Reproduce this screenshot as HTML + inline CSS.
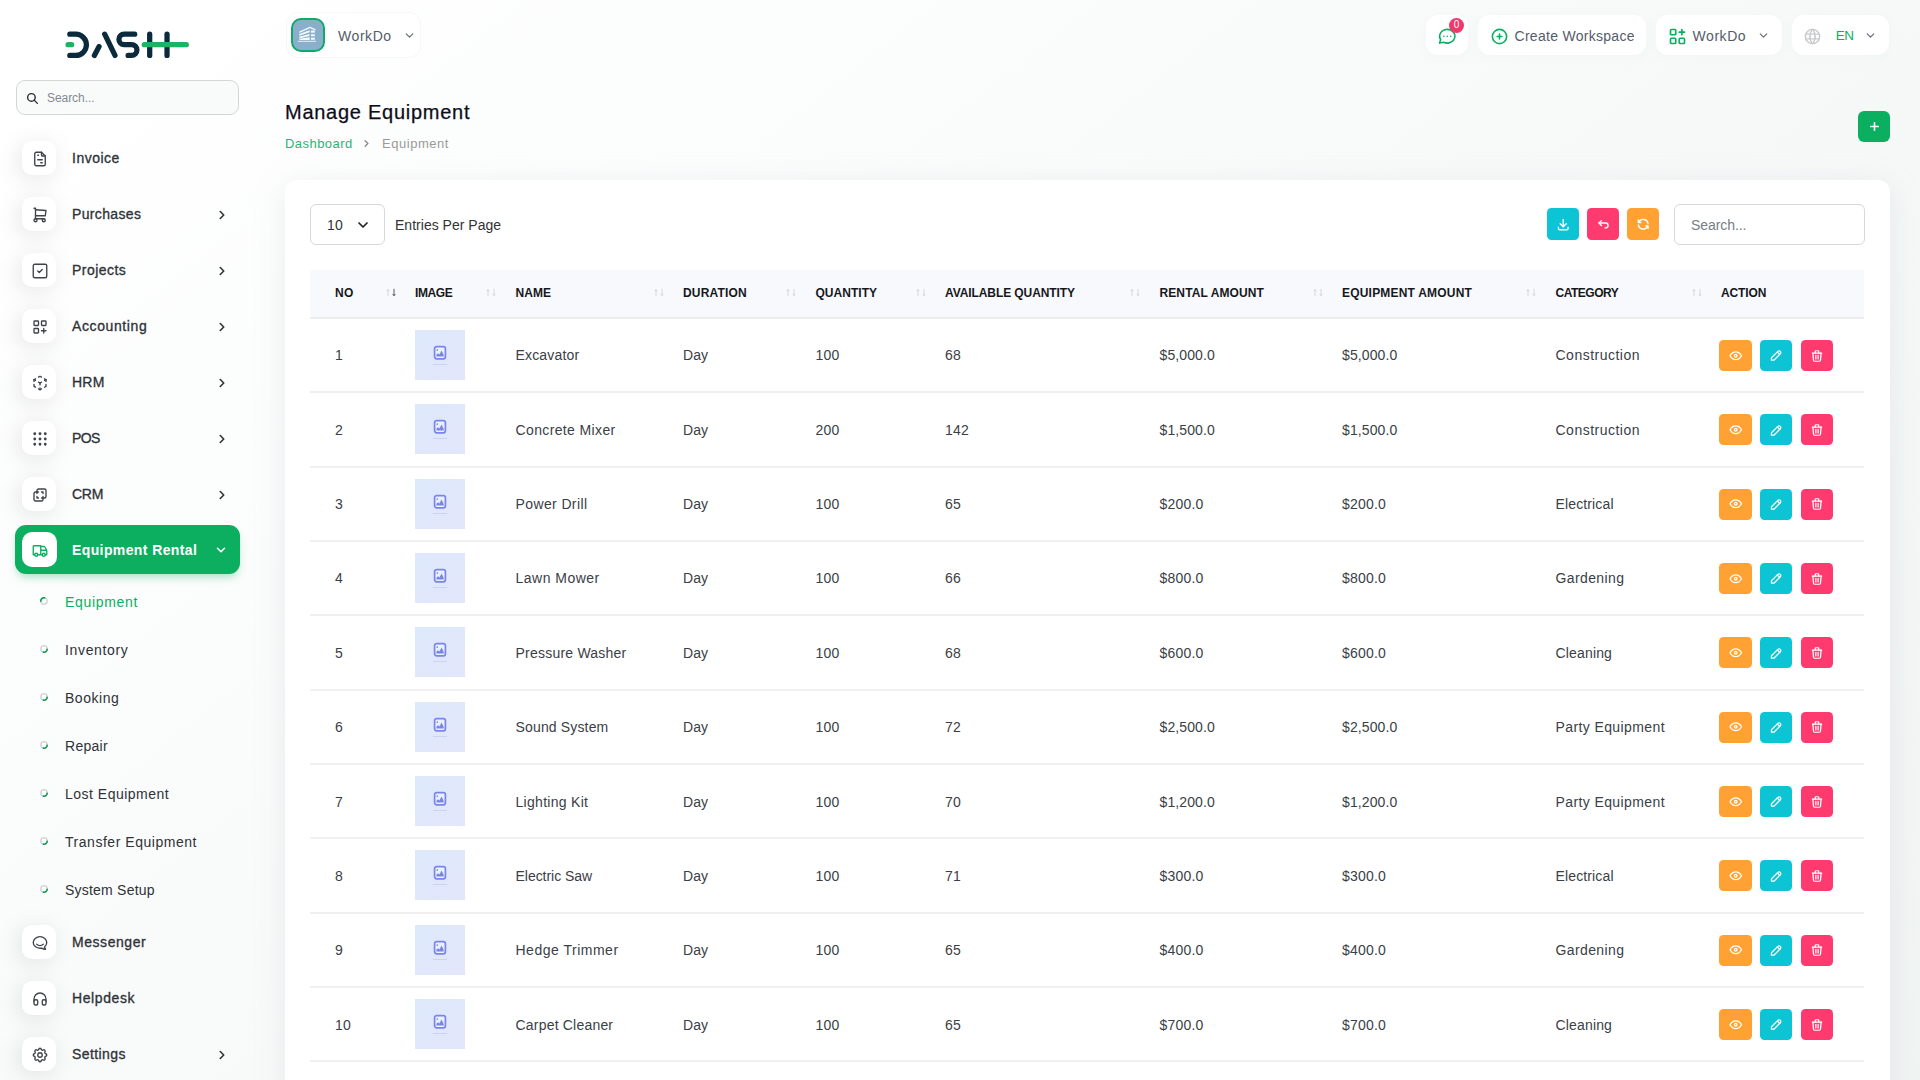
<!DOCTYPE html>
<html><head><meta charset="utf-8"><title>Manage Equipment</title>
<style>
*{box-sizing:border-box;margin:0;padding:0}
html,body{width:1920px;height:1080px;overflow:hidden}
body{font-family:"Liberation Sans",sans-serif;background:linear-gradient(141.55deg,#ffffff 3.46%,#f0f4f3 99.86%);position:relative;color:#333}
.t{position:absolute;white-space:nowrap}
.i{position:absolute;display:block}
.b{position:absolute}
.nb{position:absolute;left:22px;width:34px;height:34px;border-radius:10px;background:#fff;box-shadow:-3px 4px 23px rgba(0,0,0,.10)}
.hb{position:absolute;top:15px;height:40px;border-radius:12px;background:#fff;box-shadow:0 2px 10px rgba(180,190,200,.08)}
.ab{position:absolute;width:32.300px;height:31px;border-radius:4.500px}
.ln{position:absolute;left:310px;width:1554px;height:1.8px;background:#f0f0f1}
.im{position:absolute;left:415px;width:50px;height:50px;background:linear-gradient(135deg,#dde9fb,#e3e6fa)}
</style></head><body>
<svg class="i" style="left:40px;top:15px" width="180" height="60" viewBox="0 0 1920 640" fill="none" stroke-linecap="round" stroke-linejoin="round">
<g stroke="#0b2a3b" stroke-width="56">
<path d="M318 205H382A113 113 0 0 1 382 431H318"/>
<path d="M690 205L800 431"/><path d="M580 431L630 337"/>
<path d="M1010 205H897A55 55 0 0 0 897 315H976A58 58 0 0 1 976 431H940"/>
<path d="M1170 205V431"/><path d="M1355 205V431"/>
</g>
<g stroke="#1bb465" stroke-width="57"><path d="M300 316H337"/><path d="M1113 316H1560"/></g>
</svg>
<div class="b" style="left:16px;top:80px;width:223px;height:35px;border:1px solid #d3d6d9;border-radius:9px;background:#f9fafa"></div>
<svg class="i" style="left:26.3px;top:91.8px;" width="13" height="13" viewBox="0 0 24 24" fill="none" stroke="#2b2b2b" stroke-width="2.58" stroke-linecap="round" stroke-linejoin="round"><circle cx="10" cy="10" r="7"/><path d="M21 21l-6 -6"/></svg>
<div class="t" style="left:47.0px;top:87.5px;font-size:12px;font-weight:400;color:#858a90;line-height:20px;letter-spacing:-0.060px;">Search...</div>
<div class="nb" style="top:141px"></div>
<svg class="i" style="left:31px;top:149.8px;color:#3f444b;" width="18" height="18" viewBox="0 0 24 24" fill="none" stroke="#3f444b" stroke-width="1.80" stroke-linecap="round" stroke-linejoin="round"><path d="M14 3v4a1 1 0 0 0 1 1h4"/><path d="M17 21h-10a2 2 0 0 1 -2 -2v-14a2 2 0 0 1 2 -2h7l5 5v11a2 2 0 0 1 -2 2z"/><path d="M9 7h1"/><path d="M9 13h6"/><path d="M13 17h2"/></svg>
<div class="t" style="left:72.0px;top:148.0px;font-size:14px;font-weight:400;color:#2f3237;line-height:20px;letter-spacing:0.508px;-webkit-text-stroke:.32px #2f3237;">Invoice</div>
<div class="nb" style="top:197px"></div>
<svg class="i" style="left:31px;top:205.8px;color:#3f444b;" width="18" height="18" viewBox="0 0 24 24" fill="none" stroke="#3f444b" stroke-width="1.80" stroke-linecap="round" stroke-linejoin="round"><circle cx="6" cy="19" r="2"/><circle cx="17" cy="19" r="2"/><path d="M17 17h-11v-14h-2"/><path d="M6 5l14 1l-1 7h-13"/></svg>
<div class="t" style="left:72.0px;top:204.0px;font-size:14px;font-weight:400;color:#2f3237;line-height:20px;letter-spacing:0.356px;-webkit-text-stroke:.32px #2f3237;">Purchases</div>
<svg class="i" style="left:214.5px;top:208px;" width="14" height="14" viewBox="0 0 24 24" fill="none" stroke="#2f3237" stroke-width="2.74" stroke-linecap="round" stroke-linejoin="round"><path d="M9 6l6 6l-6 6"/></svg>
<div class="nb" style="top:253px"></div>
<svg class="i" style="left:31px;top:261.8px;color:#3f444b;" width="18" height="18" viewBox="0 0 24 24" fill="none" stroke="#3f444b" stroke-width="1.80" stroke-linecap="round" stroke-linejoin="round"><rect x="3" y="3" width="18" height="18" rx="2"/><path d="M9 12l2 2l4 -4"/></svg>
<div class="t" style="left:72.0px;top:260.0px;font-size:14px;font-weight:400;color:#2f3237;line-height:20px;letter-spacing:0.467px;-webkit-text-stroke:.32px #2f3237;">Projects</div>
<svg class="i" style="left:214.5px;top:264px;" width="14" height="14" viewBox="0 0 24 24" fill="none" stroke="#2f3237" stroke-width="2.74" stroke-linecap="round" stroke-linejoin="round"><path d="M9 6l6 6l-6 6"/></svg>
<div class="nb" style="top:309px"></div>
<svg class="i" style="left:31px;top:317.8px;color:#3f444b;" width="18" height="18" viewBox="0 0 24 24" fill="none" stroke="#3f444b" stroke-width="1.80" stroke-linecap="round" stroke-linejoin="round"><rect x="4" y="4" width="6" height="6" rx="1"/><rect x="14" y="4" width="6" height="6" rx="1"/><rect x="4" y="14" width="6" height="6" rx="1"/><path d="M14 17h6m-3 -3v6"/></svg>
<div class="t" style="left:72.0px;top:316.0px;font-size:14px;font-weight:400;color:#2f3237;line-height:20px;letter-spacing:0.608px;-webkit-text-stroke:.32px #2f3237;">Accounting</div>
<svg class="i" style="left:214.5px;top:320px;" width="14" height="14" viewBox="0 0 24 24" fill="none" stroke="#2f3237" stroke-width="2.74" stroke-linecap="round" stroke-linejoin="round"><path d="M9 6l6 6l-6 6"/></svg>
<div class="nb" style="top:365px"></div>
<svg class="i" style="left:31px;top:373.8px;color:#3f444b;" width="18" height="18" viewBox="0 0 24 24" fill="none" stroke="#3f444b" stroke-width="1.80" stroke-linecap="round" stroke-linejoin="round"><path d="M6 17.6l-2 -1.1v-2.5"/><path d="M4 10v-2.5l2 -1.1"/><path d="M10 4.1l2 -1.1l2 1.1"/><path d="M18 6.4l2 1.1v2.5"/><path d="M20 14v2.5l-2 1.12"/><path d="M14 19.9l-2 1.1l-2 -1.1"/><path d="M12 12l2 -1.1"/><path d="M18 8.6l2 -1.1"/><path d="M12 12v2.5"/><path d="M12 18.5v2.5"/><path d="M12 12l-2 -1.12"/><path d="M6 8.6l-2 -1.1"/></svg>
<div class="t" style="left:72.0px;top:372.0px;font-size:14px;font-weight:400;color:#2f3237;line-height:20px;letter-spacing:0.227px;-webkit-text-stroke:.32px #2f3237;">HRM</div>
<svg class="i" style="left:214.5px;top:376px;" width="14" height="14" viewBox="0 0 24 24" fill="none" stroke="#2f3237" stroke-width="2.74" stroke-linecap="round" stroke-linejoin="round"><path d="M9 6l6 6l-6 6"/></svg>
<div class="nb" style="top:421px"></div>
<svg class="i" style="left:31px;top:429.8px;color:#3f444b;" width="18" height="18" viewBox="0 0 24 24" fill="none" stroke="#3f444b" stroke-width="1.80" stroke-linecap="round" stroke-linejoin="round"><circle cx="5" cy="5" r="1" fill="currentColor"/><circle cx="12" cy="5" r="1" fill="currentColor"/><circle cx="19" cy="5" r="1" fill="currentColor"/><circle cx="5" cy="12" r="1" fill="currentColor"/><circle cx="12" cy="12" r="1" fill="currentColor"/><circle cx="19" cy="12" r="1" fill="currentColor"/><circle cx="5" cy="19" r="1" fill="currentColor"/><circle cx="12" cy="19" r="1" fill="currentColor"/><circle cx="19" cy="19" r="1" fill="currentColor"/></svg>
<div class="t" style="left:72.0px;top:428.0px;font-size:14px;font-weight:400;color:#2f3237;line-height:20px;letter-spacing:-0.584px;-webkit-text-stroke:.32px #2f3237;">POS</div>
<svg class="i" style="left:214.5px;top:432px;" width="14" height="14" viewBox="0 0 24 24" fill="none" stroke="#2f3237" stroke-width="2.74" stroke-linecap="round" stroke-linejoin="round"><path d="M9 6l6 6l-6 6"/></svg>
<div class="nb" style="top:477px"></div>
<svg class="i" style="left:31px;top:485.8px;color:#3f444b;" width="18" height="18" viewBox="0 0 24 24" fill="none" stroke="#3f444b" stroke-width="1.80" stroke-linecap="round" stroke-linejoin="round"><path d="M16 16v2a2 2 0 0 1 -2 2h-8a2 2 0 0 1 -2 -2v-8a2 2 0 0 1 2 -2h2v-2a2 2 0 0 1 2 -2h8a2 2 0 0 1 2 2v8a2 2 0 0 1 -2 2h-2"/><path d="M10 8h-2v2"/><path d="M8 14v2h2"/><path d="M14 8h2v2"/><path d="M16 14v2h-2"/></svg>
<div class="t" style="left:72.0px;top:484.0px;font-size:14px;font-weight:400;color:#2f3237;line-height:20px;letter-spacing:-0.287px;-webkit-text-stroke:.32px #2f3237;">CRM</div>
<svg class="i" style="left:214.5px;top:488px;" width="14" height="14" viewBox="0 0 24 24" fill="none" stroke="#2f3237" stroke-width="2.74" stroke-linecap="round" stroke-linejoin="round"><path d="M9 6l6 6l-6 6"/></svg>
<div class="b" style="left:15px;top:525px;width:225px;height:49px;border-radius:11px;background:#0CAF60;box-shadow:0 5px 8px -2px rgba(12,175,96,.35)"></div>
<div class="b" style="left:22px;top:532.2px;width:34.8px;height:34.8px;border-radius:10px;background:#fff"></div>
<svg class="i" style="left:31px;top:541.8px;" width="18" height="18" viewBox="0 0 24 24" fill="none" stroke="#0CAF60" stroke-width="1.80" stroke-linecap="round" stroke-linejoin="round"><circle cx="7" cy="17" r="2"/><circle cx="17" cy="17" r="2"/><path d="M5 17h-2v-11a1 1 0 0 1 1 -1h9v12m-4 0h6m4 0h2v-6h-8m0 -5h5l3 5"/></svg>
<div class="t" style="left:72.0px;top:540.0px;font-size:14px;font-weight:700;color:#fff;line-height:20px;letter-spacing:0.391px;">Equipment Rental</div>
<svg class="i" style="left:213.5px;top:542.5px;" width="14" height="14" viewBox="0 0 24 24" fill="none" stroke="#fff" stroke-width="2.74" stroke-linecap="round" stroke-linejoin="round"><path d="M6 9l6 6l6 -6"/></svg>
<svg class="i" style="left:38.9px;top:595.7px" width="10" height="10" viewBox="0 0 10 10" fill="none"><circle cx="5" cy="5" r="3.2" stroke="#d6d8d7" stroke-width="1.5"/><path d="M1.81 5.28A3.2 3.2 0 0 1 5.56 1.85" stroke="#0a9d57" stroke-width="1.6" stroke-linecap="round"/></svg>
<div class="t" style="left:65.0px;top:591.5px;font-size:14px;font-weight:400;color:#0CAF60;line-height:20px;letter-spacing:0.676px;">Equipment</div>
<svg class="i" style="left:38.9px;top:643.7px" width="10" height="10" viewBox="0 0 10 10" fill="none"><circle cx="5" cy="5" r="3.2" stroke="#d6d8d7" stroke-width="1.5"/><path d="M8.19 5.28A3.2 3.2 0 0 1 4.44 8.15" stroke="#0a9d57" stroke-width="1.6" stroke-linecap="round"/></svg>
<div class="t" style="left:65.0px;top:639.5px;font-size:14px;font-weight:400;color:#2f3237;line-height:20px;letter-spacing:0.658px;">Inventory</div>
<svg class="i" style="left:38.9px;top:691.7px" width="10" height="10" viewBox="0 0 10 10" fill="none"><circle cx="5" cy="5" r="3.2" stroke="#d6d8d7" stroke-width="1.5"/><path d="M8.19 5.28A3.2 3.2 0 0 1 4.44 8.15" stroke="#0a9d57" stroke-width="1.6" stroke-linecap="round"/></svg>
<div class="t" style="left:65.0px;top:687.5px;font-size:14px;font-weight:400;color:#2f3237;line-height:20px;letter-spacing:0.530px;">Booking</div>
<svg class="i" style="left:38.9px;top:739.7px" width="10" height="10" viewBox="0 0 10 10" fill="none"><circle cx="5" cy="5" r="3.2" stroke="#d6d8d7" stroke-width="1.5"/><path d="M8.19 5.28A3.2 3.2 0 0 1 4.44 8.15" stroke="#0a9d57" stroke-width="1.6" stroke-linecap="round"/></svg>
<div class="t" style="left:65.0px;top:735.5px;font-size:14px;font-weight:400;color:#2f3237;line-height:20px;letter-spacing:0.277px;">Repair</div>
<svg class="i" style="left:38.9px;top:787.7px" width="10" height="10" viewBox="0 0 10 10" fill="none"><circle cx="5" cy="5" r="3.2" stroke="#d6d8d7" stroke-width="1.5"/><path d="M8.19 5.28A3.2 3.2 0 0 1 4.44 8.15" stroke="#0a9d57" stroke-width="1.6" stroke-linecap="round"/></svg>
<div class="t" style="left:65.0px;top:783.5px;font-size:14px;font-weight:400;color:#2f3237;line-height:20px;letter-spacing:0.493px;">Lost Equipment</div>
<svg class="i" style="left:38.9px;top:835.7px" width="10" height="10" viewBox="0 0 10 10" fill="none"><circle cx="5" cy="5" r="3.2" stroke="#d6d8d7" stroke-width="1.5"/><path d="M8.19 5.28A3.2 3.2 0 0 1 4.44 8.15" stroke="#0a9d57" stroke-width="1.6" stroke-linecap="round"/></svg>
<div class="t" style="left:65.0px;top:831.5px;font-size:14px;font-weight:400;color:#2f3237;line-height:20px;letter-spacing:0.534px;">Transfer Equipment</div>
<svg class="i" style="left:38.9px;top:883.7px" width="10" height="10" viewBox="0 0 10 10" fill="none"><circle cx="5" cy="5" r="3.2" stroke="#d6d8d7" stroke-width="1.5"/><path d="M8.19 5.28A3.2 3.2 0 0 1 4.44 8.15" stroke="#0a9d57" stroke-width="1.6" stroke-linecap="round"/></svg>
<div class="t" style="left:65.0px;top:879.5px;font-size:14px;font-weight:400;color:#2f3237;line-height:20px;letter-spacing:0.220px;">System Setup</div>
<div class="nb" style="top:925px"></div>
<svg class="i" style="left:31px;top:933.8px;" width="18" height="18" viewBox="0 0 24 24" fill="none" stroke="#3f444b" stroke-width="1.80" stroke-linecap="round" stroke-linejoin="round"><path d="M17.802 17.292s.077 -.055 .2 -.149c1.843 -1.425 3 -3.49 3 -5.789c0 -4.286 -4.03 -7.764 -9 -7.764c-4.97 0 -9 3.478 -9 7.764c0 4.288 4.03 7.646 9 7.646c.424 0 1.12 -.028 2.088 -.084c1.262 .82 3.104 1.493 4.716 1.493c.499 0 .734 -.41 .414 -.828c-.486 -.596 -1.156 -1.551 -1.416 -2.29z"/><path d="M7.5 13.5c2.5 2.5 6.5 2.5 9 0"/></svg>
<div class="t" style="left:72.0px;top:932.0px;font-size:14px;font-weight:400;color:#2f3237;line-height:20px;letter-spacing:0.552px;-webkit-text-stroke:.32px #2f3237;">Messenger</div>
<div class="nb" style="top:981px"></div>
<svg class="i" style="left:31px;top:989.8px;" width="18" height="18" viewBox="0 0 24 24" fill="none" stroke="#3f444b" stroke-width="1.80" stroke-linecap="round" stroke-linejoin="round"><rect x="4" y="13" width="5" height="7" rx="2"/><rect x="15" y="13" width="5" height="7" rx="2"/><path d="M4 15v-3a8 8 0 0 1 16 0v3"/></svg>
<div class="t" style="left:72.0px;top:988.0px;font-size:14px;font-weight:400;color:#2f3237;line-height:20px;letter-spacing:0.602px;-webkit-text-stroke:.32px #2f3237;">Helpdesk</div>
<div class="nb" style="top:1037px"></div>
<svg class="i" style="left:31px;top:1045.8px;" width="18" height="18" viewBox="0 0 24 24" fill="none" stroke="#3f444b" stroke-width="1.80" stroke-linecap="round" stroke-linejoin="round"><path d="M10.325 4.317c.426 -1.756 2.924 -1.756 3.35 0a1.724 1.724 0 0 0 2.573 1.066c1.543 -.94 3.31 .826 2.37 2.37a1.724 1.724 0 0 0 1.065 2.572c1.756 .426 1.756 2.924 0 3.35a1.724 1.724 0 0 0 -1.066 2.573c.94 1.543 -.826 3.31 -2.37 2.37a1.724 1.724 0 0 0 -2.572 1.065c-.426 1.756 -2.924 1.756 -3.35 0a1.724 1.724 0 0 0 -2.573 -1.066c-1.543 .94 -3.31 -.826 -2.37 -2.37a1.724 1.724 0 0 0 -1.065 -2.572c-1.756 -.426 -1.756 -2.924 0 -3.35a1.724 1.724 0 0 0 1.066 -2.573c-.94 -1.543 .826 -3.31 2.37 -2.37c1 .608 2.296 .07 2.572 -1.065z"/><circle cx="12" cy="12" r="3"/></svg>
<div class="t" style="left:72.0px;top:1044.0px;font-size:14px;font-weight:400;color:#2f3237;line-height:20px;letter-spacing:0.410px;-webkit-text-stroke:.32px #2f3237;">Settings</div>
<svg class="i" style="left:214.5px;top:1048px;" width="14" height="14" viewBox="0 0 24 24" fill="none" stroke="#2f3237" stroke-width="2.74" stroke-linecap="round" stroke-linejoin="round"><path d="M9 6l6 6l-6 6"/></svg>
<div class="b" style="left:285.5px;top:12px;width:135.5px;height:45.5px;border-radius:12px;background:#fff;border:1px solid #f6f7f7"></div>
<div class="b" style="left:291.1px;top:17.900px;width:33.800px;height:33.800px;border-radius:10px;background:#8aafcb;border:2px solid #10a968"></div>
<svg class="i" style="left:288px;top:14px" width="40" height="42" viewBox="0 0 1029 1080" fill="#f4f9fd"><path d="M300 465L565 345L692 402" fill="none" stroke="#f4f9fd" stroke-width="32" stroke-linejoin="round" stroke-linecap="round"/><path d="M290 515L557 418V472L290 560z"/><path d="M290 585L552 512V568L290 630z"/><path d="M298 636L557 598V668H298z"/><rect x="590" y="425" width="100" height="55"/><rect x="590" y="520" width="100" height="52"/><rect x="590" y="608" width="100" height="55"/><rect x="250" y="690" width="470" height="22"/></svg>
<div class="t" style="left:338.0px;top:25.5px;font-size:14px;font-weight:400;color:#555c6b;line-height:20px;letter-spacing:0.566px;">WorkDo</div>
<svg class="i" style="left:402.5px;top:28.5px;" width="13" height="13" viewBox="0 0 24 24" fill="none" stroke="#666c78" stroke-width="2.22" stroke-linecap="round" stroke-linejoin="round"><path d="M6 9l6 6l6 -6"/></svg>
<div class="hb" style="left:1425.5px;width:42px"></div>
<svg class="i" style="left:1437px;top:26px;" width="20.5" height="20.5" viewBox="0 0 24 24" fill="none" stroke="#0CAF60" stroke-width="1.87" stroke-linecap="round" stroke-linejoin="round"><path d="M3 20l1.3 -3.9c-2.324 -3.437 -1.426 -7.872 2.1 -10.374c3.526 -2.501 8.59 -2.296 11.845 .48c3.255 2.777 3.695 7.266 1.029 10.501c-2.666 3.235 -7.615 4.215 -11.574 2.293l-4.7 1"/><path d="M12 12v.01"/><path d="M8 12v.01"/><path d="M16 12v.01"/></svg>
<div class="b" style="left:1449px;top:17.900px;width:15px;height:15px;border-radius:8px;background:#f0386b"></div>
<div class="t" style="left:1453.8px;top:19.2px;font-size:10px;font-weight:400;color:#fff;line-height:12px;letter-spacing:0.037px;">0</div>
<div class="hb" style="left:1478px;width:168px"></div>
<svg class="i" style="left:1489.5px;top:26.5px;" width="19" height="19" viewBox="0 0 24 24" fill="none" stroke="#0CAF60" stroke-width="2.02" stroke-linecap="round" stroke-linejoin="round"><circle cx="12" cy="12" r="9"/><path d="M9 12h6"/><path d="M12 9v6"/></svg>
<div class="t" style="left:1514.5px;top:25.5px;font-size:14px;font-weight:400;color:#555c6b;line-height:20px;letter-spacing:0.287px;">Create Workspace</div>
<div class="hb" style="left:1656px;width:125.500px"></div>
<svg class="i" style="left:1666.5px;top:25.5px;" width="21" height="21" viewBox="0 0 24 24" fill="none" stroke="#0CAF60" stroke-width="1.94" stroke-linecap="round" stroke-linejoin="round"><rect x="4" y="4" width="6" height="6" rx="1"/><rect x="4" y="14" width="6" height="6" rx="1"/><rect x="14" y="14" width="6" height="6" rx="1"/><path d="M14 7h6m-3 -3v6"/></svg>
<div class="t" style="left:1692.5px;top:25.5px;font-size:14px;font-weight:400;color:#555c6b;line-height:20px;letter-spacing:0.566px;">WorkDo</div>
<svg class="i" style="left:1756.5px;top:28.5px;" width="13" height="13" viewBox="0 0 24 24" fill="none" stroke="#666c78" stroke-width="2.22" stroke-linecap="round" stroke-linejoin="round"><path d="M6 9l6 6l6 -6"/></svg>
<div class="hb" style="left:1791.500px;width:97.500px"></div>
<svg class="i" style="left:1802.5px;top:26.5px;" width="19" height="19" viewBox="0 0 24 24" fill="none" stroke="#c9cbcd" stroke-width="1.89" stroke-linecap="round" stroke-linejoin="round"><circle cx="12" cy="12" r="9"/><path d="M3.6 9h16.8"/><path d="M3.6 15h16.8"/><path d="M11.5 3a17 17 0 0 0 0 18"/><path d="M12.5 3a17 17 0 0 1 0 18"/></svg>
<div class="t" style="left:1835.8px;top:25.5px;font-size:13.5px;font-weight:400;color:#0CAF60;line-height:20px;letter-spacing:-0.483px;">EN</div>
<svg class="i" style="left:1864px;top:28.5px;" width="13" height="13" viewBox="0 0 24 24" fill="none" stroke="#666c78" stroke-width="2.22" stroke-linecap="round" stroke-linejoin="round"><path d="M6 9l6 6l6 -6"/></svg>
<div class="t" style="left:285.0px;top:98.5px;font-size:20px;font-weight:400;color:#0d0d19;line-height:26px;letter-spacing:0.736px;-webkit-text-stroke:.25px #0d0d19;">Manage Equipment</div>
<div class="t" style="left:285.0px;top:134.8px;font-size:13px;font-weight:400;color:#27b575;line-height:18px;letter-spacing:0.450px;">Dashboard</div>
<svg class="i" style="left:361px;top:137.5px;" width="11" height="11" viewBox="0 0 24 24" fill="none" stroke="#8c8c8c" stroke-width="3.05" stroke-linecap="round" stroke-linejoin="round"><path d="M9 6l6 6l-6 6"/></svg>
<div class="t" style="left:382.0px;top:134.8px;font-size:13px;font-weight:400;color:#9a9a9a;line-height:18px;letter-spacing:0.528px;">Equipment</div>
<div class="b" style="left:1858px;top:111px;width:32px;height:31px;border-radius:6px;background:#0CAF60"></div>
<svg class="i" style="left:1867.5px;top:120px;" width="13" height="13" viewBox="0 0 24 24" fill="none" stroke="#fff" stroke-width="2.95" stroke-linecap="round" stroke-linejoin="round"><path d="M12 5v14"/><path d="M5 12h14"/></svg>
<div class="b" style="left:285px;top:180px;width:1605px;height:920px;border-radius:12px;background:#fff;box-shadow:0 6px 30px rgba(186,188,198,.26)"></div>
<div class="b" style="left:310px;top:204.2px;width:74.5px;height:40.500px;border:1px solid #d4d8dc;border-radius:6px;background:#fff"></div>
<div class="t" style="left:327.0px;top:215.0px;font-size:14px;font-weight:400;color:#333;line-height:20px;letter-spacing:0.216px;">10</div>
<svg class="i" style="left:355px;top:216.5px;" width="16" height="16" viewBox="0 0 24 24" fill="none" stroke="#222" stroke-width="2.55" stroke-linecap="round" stroke-linejoin="round"><path d="M6 9l6 6l6 -6"/></svg>
<div class="t" style="left:395.0px;top:215.0px;font-size:14px;font-weight:400;color:#333;line-height:20px;letter-spacing:0.018px;">Entries Per Page</div>
<div class="ab" style="left:1547px;top:208px;height:32px;background:#0cc4d4"></div>
<svg class="i" style="left:1555.75px;top:216.75px;" width="14.5" height="14.5" viewBox="0 0 24 24" fill="none" stroke="#fff" stroke-width="2.32" stroke-linecap="round" stroke-linejoin="round"><path d="M4 17v2a2 2 0 0 0 2 2h12a2 2 0 0 0 2 -2v-2"/><path d="M7 11l5 5l5 -5"/><path d="M12 4v12"/></svg>
<div class="ab" style="left:1587px;top:208px;height:32px;background:#ff3a6e"></div>
<svg class="i" style="left:1595.75px;top:216.75px;" width="14.5" height="14.5" viewBox="0 0 24 24" fill="none" stroke="#fff" stroke-width="2.32" stroke-linecap="round" stroke-linejoin="round"><path d="M9 14l-4 -4l4 -4"/><path d="M5 10h11a4 4 0 1 1 0 8h-1"/></svg>
<div class="ab" style="left:1627px;top:208px;height:32px;background:#ffa233"></div>
<svg class="i" style="left:1635.75px;top:216.75px;" width="14.5" height="14.5" viewBox="0 0 24 24" fill="none" stroke="#fff" stroke-width="2.32" stroke-linecap="round" stroke-linejoin="round"><path d="M20 11a8.1 8.1 0 0 0 -15.5 -2m-.5 -4v4h4"/><path d="M4 13a8.1 8.1 0 0 0 15.500 2m.5 4v-4h-4"/></svg>
<div class="b" style="left:1674px;top:204.2px;width:190.5px;height:40.800px;border:1px solid #d4d8dc;border-radius:6px;background:#fff"></div>
<div class="t" style="left:1691.0px;top:215.0px;font-size:14px;font-weight:400;color:#767e86;line-height:20px;letter-spacing:-0.070px;">Search...</div>
<div class="b" style="left:310px;top:270.4px;width:1554px;height:47px;background:#f8f9fd"></div>
<div class="ln" style="top:317px;background:#ececed;height:2px"></div>
<div class="t" style="left:335.0px;top:284.5px;font-size:12px;font-weight:700;color:#16181b;line-height:16px;letter-spacing:0.400px;">NO</div>
<div class="t" style="left:415.0px;top:284.5px;font-size:12px;font-weight:700;color:#16181b;line-height:16px;letter-spacing:-0.386px;">IMAGE</div>
<div class="t" style="left:515.5px;top:284.5px;font-size:12px;font-weight:700;color:#16181b;line-height:16px;letter-spacing:0.052px;">NAME</div>
<div class="t" style="left:683.0px;top:284.5px;font-size:12px;font-weight:700;color:#16181b;line-height:16px;letter-spacing:0.180px;">DURATION</div>
<div class="t" style="left:815.5px;top:284.5px;font-size:12px;font-weight:700;color:#16181b;line-height:16px;letter-spacing:0.022px;">QUANTITY</div>
<div class="t" style="left:945.0px;top:284.5px;font-size:12px;font-weight:700;color:#16181b;line-height:16px;letter-spacing:-0.086px;">AVAILABLE QUANTITY</div>
<div class="t" style="left:1159.5px;top:284.5px;font-size:12px;font-weight:700;color:#16181b;line-height:16px;letter-spacing:0.099px;">RENTAL AMOUNT</div>
<div class="t" style="left:1342.0px;top:284.5px;font-size:12px;font-weight:700;color:#16181b;line-height:16px;letter-spacing:0.201px;">EQUIPMENT AMOUNT</div>
<div class="t" style="left:1555.5px;top:284.5px;font-size:12px;font-weight:700;color:#16181b;line-height:16px;letter-spacing:-0.496px;">CATEGORY</div>
<div class="t" style="left:1721.0px;top:284.5px;font-size:12px;font-weight:700;color:#16181b;line-height:16px;letter-spacing:-0.140px;">ACTION</div>
<svg class="i" style="left:385px;top:288px" width="12" height="9" viewBox="0 0 12 9" fill="none" stroke-width=".85" stroke-linecap="round" stroke-linejoin="round"><path d="M3 7.8V1.6M1.9 2.8L3 1.6L4.1 2.8" stroke="#cfd2d7"/><path d="M9 1.2V7.6M7.9 6.400L9 7.6L10.1 6.400" stroke="#3c4152"/></svg>
<svg class="i" style="left:485px;top:288px" width="12" height="9" viewBox="0 0 12 9" fill="none" stroke-width=".85" stroke-linecap="round" stroke-linejoin="round"><path d="M3 7.8V1.6M1.9 2.8L3 1.6L4.1 2.8" stroke="#cfd2d7"/><path d="M9 1.2V7.6M7.9 6.400L9 7.6L10.1 6.400" stroke="#cfd2d7"/></svg>
<svg class="i" style="left:653px;top:288px" width="12" height="9" viewBox="0 0 12 9" fill="none" stroke-width=".85" stroke-linecap="round" stroke-linejoin="round"><path d="M3 7.8V1.6M1.9 2.8L3 1.6L4.1 2.8" stroke="#cfd2d7"/><path d="M9 1.2V7.6M7.9 6.400L9 7.6L10.1 6.400" stroke="#cfd2d7"/></svg>
<svg class="i" style="left:785px;top:288px" width="12" height="9" viewBox="0 0 12 9" fill="none" stroke-width=".85" stroke-linecap="round" stroke-linejoin="round"><path d="M3 7.8V1.6M1.9 2.8L3 1.6L4.1 2.8" stroke="#cfd2d7"/><path d="M9 1.2V7.6M7.9 6.400L9 7.6L10.1 6.400" stroke="#cfd2d7"/></svg>
<svg class="i" style="left:915px;top:288px" width="12" height="9" viewBox="0 0 12 9" fill="none" stroke-width=".85" stroke-linecap="round" stroke-linejoin="round"><path d="M3 7.8V1.6M1.9 2.8L3 1.6L4.1 2.8" stroke="#cfd2d7"/><path d="M9 1.2V7.6M7.9 6.400L9 7.6L10.1 6.400" stroke="#cfd2d7"/></svg>
<svg class="i" style="left:1129px;top:288px" width="12" height="9" viewBox="0 0 12 9" fill="none" stroke-width=".85" stroke-linecap="round" stroke-linejoin="round"><path d="M3 7.8V1.6M1.9 2.8L3 1.6L4.1 2.8" stroke="#cfd2d7"/><path d="M9 1.2V7.6M7.9 6.400L9 7.6L10.1 6.400" stroke="#cfd2d7"/></svg>
<svg class="i" style="left:1312px;top:288px" width="12" height="9" viewBox="0 0 12 9" fill="none" stroke-width=".85" stroke-linecap="round" stroke-linejoin="round"><path d="M3 7.8V1.6M1.9 2.8L3 1.6L4.1 2.8" stroke="#cfd2d7"/><path d="M9 1.2V7.6M7.9 6.400L9 7.6L10.1 6.400" stroke="#cfd2d7"/></svg>
<svg class="i" style="left:1525px;top:288px" width="12" height="9" viewBox="0 0 12 9" fill="none" stroke-width=".85" stroke-linecap="round" stroke-linejoin="round"><path d="M3 7.8V1.6M1.9 2.8L3 1.6L4.1 2.8" stroke="#cfd2d7"/><path d="M9 1.2V7.6M7.9 6.400L9 7.6L10.1 6.400" stroke="#cfd2d7"/></svg>
<svg class="i" style="left:1691px;top:288px" width="12" height="9" viewBox="0 0 12 9" fill="none" stroke-width=".85" stroke-linecap="round" stroke-linejoin="round"><path d="M3 7.8V1.6M1.9 2.8L3 1.6L4.1 2.8" stroke="#cfd2d7"/><path d="M9 1.2V7.6M7.9 6.400L9 7.6L10.1 6.400" stroke="#cfd2d7"/></svg>
<div class="t" style="left:335.0px;top:345.0px;font-size:14px;font-weight:400;color:#3a4046;line-height:20px;letter-spacing:0.208px;">1</div>
<div class="t" style="left:515.5px;top:345.0px;font-size:14px;font-weight:400;color:#3a4046;line-height:20px;letter-spacing:0.163px;">Excavator</div>
<div class="t" style="left:683.0px;top:345.0px;font-size:14px;font-weight:400;color:#3a4046;line-height:20px;letter-spacing:0.042px;">Day</div>
<div class="t" style="left:815.5px;top:345.0px;font-size:14px;font-weight:400;color:#3a4046;line-height:20px;letter-spacing:0.218px;">100</div>
<div class="t" style="left:945.0px;top:345.0px;font-size:14px;font-weight:400;color:#3a4046;line-height:20px;letter-spacing:0.216px;">68</div>
<div class="t" style="left:1159.5px;top:345.0px;font-size:14px;font-weight:400;color:#3a4046;line-height:20px;letter-spacing:0.098px;">$5,000.0</div>
<div class="t" style="left:1342.0px;top:345.0px;font-size:14px;font-weight:400;color:#3a4046;line-height:20px;letter-spacing:0.098px;">$5,000.0</div>
<div class="t" style="left:1555.5px;top:345.0px;font-size:14px;font-weight:400;color:#3a4046;line-height:20px;letter-spacing:0.492px;">Construction</div>
<div class="im" style="top:330px"></div>
<svg class="i" style="left:432.9px;top:345.1px" width="14" height="15.4" viewBox="0 0 14 15.4"><rect x="1.6" y="1.6" width="10.8" height="12.2" rx="2" stroke="#7b84e8" stroke-width="1.7" fill="#e9f1fe"/><path d="M3.4 11.6V9.8L5 8.2L6.4 9.6L8.6 5.4L10.7 10V11.600z" fill="#7b84e8"/><rect x="3.6" y="4.2" width="1.3" height="1.900" rx=".4" fill="#7b84e8"/></svg>
<div class="b" style="left:433px;top:364.0px;width:14px;height:1px;background:#ccd3ef"></div>
<div class="ab" style="left:1719.2px;width:33.2px;top:339.95px;background:#ffa233"></div>
<svg class="i" style="left:1727.75px;top:347.8px;" width="15.5" height="15.5" viewBox="0 0 24 24" fill="none" stroke="#fff" stroke-width="1.94" stroke-linecap="round" stroke-linejoin="round"><circle cx="12" cy="12" r="2"/><path d="M21 12c-2.4 4 -5.4 6 -9 6c-3.6 0 -6.6 -2 -9 -6c2.4 -4 5.4 -6 9 -6c3.6 0 6.6 2 9 6"/></svg>
<div class="ab" style="left:1760.2px;width:32px;top:339.95px;background:#0cc4d4"></div>
<svg class="i" style="left:1769.0500000000002px;top:348.2px;" width="14.7" height="14.7" viewBox="0 0 24 24" fill="none" stroke="#fff" stroke-width="2.04" stroke-linecap="round" stroke-linejoin="round"><path d="M4 20h4l10.5 -10.5a2.828 2.828 0 1 0 -4 -4l-10.5 10.5v4"/><path d="M13.5 6.5l4 4"/></svg>
<div class="ab" style="left:1801px;width:32px;top:339.95px;background:#ff3a6e"></div>
<svg class="i" style="left:1810.2px;top:348.55px;" width="14" height="14" viewBox="0 0 24 24" fill="none" stroke="#fff" stroke-width="2.14" stroke-linecap="round" stroke-linejoin="round"><path d="M4 7h16"/><path d="M10 11v6"/><path d="M14 11v6"/><path d="M5 7l1 12a2 2 0 0 0 2 2h8a2 2 0 0 0 2 -2l1 -12"/><path d="M9 7v-3a1 1 0 0 1 1 -1h4a1 1 0 0 1 1 1v3"/></svg>
<div class="ln" style="top:391.4px"></div>
<div class="t" style="left:335.0px;top:420.0px;font-size:14px;font-weight:400;color:#3a4046;line-height:20px;letter-spacing:0.208px;">2</div>
<div class="t" style="left:515.5px;top:420.0px;font-size:14px;font-weight:400;color:#3a4046;line-height:20px;letter-spacing:0.368px;">Concrete Mixer</div>
<div class="t" style="left:683.0px;top:420.0px;font-size:14px;font-weight:400;color:#3a4046;line-height:20px;letter-spacing:0.042px;">Day</div>
<div class="t" style="left:815.5px;top:420.0px;font-size:14px;font-weight:400;color:#3a4046;line-height:20px;letter-spacing:0.218px;">200</div>
<div class="t" style="left:945.0px;top:420.0px;font-size:14px;font-weight:400;color:#3a4046;line-height:20px;letter-spacing:0.218px;">142</div>
<div class="t" style="left:1159.5px;top:420.0px;font-size:14px;font-weight:400;color:#3a4046;line-height:20px;letter-spacing:0.098px;">$1,500.0</div>
<div class="t" style="left:1342.0px;top:420.0px;font-size:14px;font-weight:400;color:#3a4046;line-height:20px;letter-spacing:0.098px;">$1,500.0</div>
<div class="t" style="left:1555.5px;top:420.0px;font-size:14px;font-weight:400;color:#3a4046;line-height:20px;letter-spacing:0.492px;">Construction</div>
<div class="im" style="top:404px"></div>
<svg class="i" style="left:432.9px;top:419.1px" width="14" height="15.4" viewBox="0 0 14 15.4"><rect x="1.6" y="1.6" width="10.8" height="12.2" rx="2" stroke="#7b84e8" stroke-width="1.7" fill="#e9f1fe"/><path d="M3.4 11.6V9.8L5 8.2L6.4 9.6L8.6 5.4L10.7 10V11.600z" fill="#7b84e8"/><rect x="3.6" y="4.2" width="1.3" height="1.900" rx=".4" fill="#7b84e8"/></svg>
<div class="b" style="left:433px;top:438.0px;width:14px;height:1px;background:#ccd3ef"></div>
<div class="ab" style="left:1719.2px;width:33.2px;top:414.28px;background:#ffa233"></div>
<svg class="i" style="left:1727.75px;top:422.1334px;" width="15.5" height="15.5" viewBox="0 0 24 24" fill="none" stroke="#fff" stroke-width="1.94" stroke-linecap="round" stroke-linejoin="round"><circle cx="12" cy="12" r="2"/><path d="M21 12c-2.4 4 -5.4 6 -9 6c-3.6 0 -6.6 -2 -9 -6c2.4 -4 5.4 -6 9 -6c3.6 0 6.6 2 9 6"/></svg>
<div class="ab" style="left:1760.2px;width:32px;top:414.28px;background:#0cc4d4"></div>
<svg class="i" style="left:1769.0500000000002px;top:422.5334px;" width="14.7" height="14.7" viewBox="0 0 24 24" fill="none" stroke="#fff" stroke-width="2.04" stroke-linecap="round" stroke-linejoin="round"><path d="M4 20h4l10.5 -10.5a2.828 2.828 0 1 0 -4 -4l-10.5 10.5v4"/><path d="M13.5 6.5l4 4"/></svg>
<div class="ab" style="left:1801px;width:32px;top:414.28px;background:#ff3a6e"></div>
<svg class="i" style="left:1810.2px;top:422.8834px;" width="14" height="14" viewBox="0 0 24 24" fill="none" stroke="#fff" stroke-width="2.14" stroke-linecap="round" stroke-linejoin="round"><path d="M4 7h16"/><path d="M10 11v6"/><path d="M14 11v6"/><path d="M5 7l1 12a2 2 0 0 0 2 2h8a2 2 0 0 0 2 -2l1 -12"/><path d="M9 7v-3a1 1 0 0 1 1 -1h4a1 1 0 0 1 1 1v3"/></svg>
<div class="ln" style="top:466.4px"></div>
<div class="t" style="left:335.0px;top:494.0px;font-size:14px;font-weight:400;color:#3a4046;line-height:20px;letter-spacing:0.208px;">3</div>
<div class="t" style="left:515.5px;top:494.0px;font-size:14px;font-weight:400;color:#3a4046;line-height:20px;letter-spacing:0.384px;">Power Drill</div>
<div class="t" style="left:683.0px;top:494.0px;font-size:14px;font-weight:400;color:#3a4046;line-height:20px;letter-spacing:0.042px;">Day</div>
<div class="t" style="left:815.5px;top:494.0px;font-size:14px;font-weight:400;color:#3a4046;line-height:20px;letter-spacing:0.218px;">100</div>
<div class="t" style="left:945.0px;top:494.0px;font-size:14px;font-weight:400;color:#3a4046;line-height:20px;letter-spacing:0.216px;">65</div>
<div class="t" style="left:1159.5px;top:494.0px;font-size:14px;font-weight:400;color:#3a4046;line-height:20px;letter-spacing:0.184px;">$200.0</div>
<div class="t" style="left:1342.0px;top:494.0px;font-size:14px;font-weight:400;color:#3a4046;line-height:20px;letter-spacing:0.184px;">$200.0</div>
<div class="t" style="left:1555.5px;top:494.0px;font-size:14px;font-weight:400;color:#3a4046;line-height:20px;letter-spacing:0.138px;">Electrical</div>
<div class="im" style="top:479px"></div>
<svg class="i" style="left:432.9px;top:494.1px" width="14" height="15.4" viewBox="0 0 14 15.4"><rect x="1.6" y="1.6" width="10.8" height="12.2" rx="2" stroke="#7b84e8" stroke-width="1.7" fill="#e9f1fe"/><path d="M3.4 11.6V9.8L5 8.2L6.4 9.6L8.6 5.4L10.7 10V11.600z" fill="#7b84e8"/><rect x="3.6" y="4.2" width="1.3" height="1.900" rx=".4" fill="#7b84e8"/></svg>
<div class="b" style="left:433px;top:513.0px;width:14px;height:1px;background:#ccd3ef"></div>
<div class="ab" style="left:1719.2px;width:33.2px;top:488.62px;background:#ffa233"></div>
<svg class="i" style="left:1727.75px;top:496.46680000000003px;" width="15.5" height="15.5" viewBox="0 0 24 24" fill="none" stroke="#fff" stroke-width="1.94" stroke-linecap="round" stroke-linejoin="round"><circle cx="12" cy="12" r="2"/><path d="M21 12c-2.4 4 -5.4 6 -9 6c-3.6 0 -6.6 -2 -9 -6c2.4 -4 5.4 -6 9 -6c3.6 0 6.6 2 9 6"/></svg>
<div class="ab" style="left:1760.2px;width:32px;top:488.62px;background:#0cc4d4"></div>
<svg class="i" style="left:1769.0500000000002px;top:496.8668px;" width="14.7" height="14.7" viewBox="0 0 24 24" fill="none" stroke="#fff" stroke-width="2.04" stroke-linecap="round" stroke-linejoin="round"><path d="M4 20h4l10.5 -10.5a2.828 2.828 0 1 0 -4 -4l-10.5 10.5v4"/><path d="M13.5 6.5l4 4"/></svg>
<div class="ab" style="left:1801px;width:32px;top:488.62px;background:#ff3a6e"></div>
<svg class="i" style="left:1810.2px;top:497.21680000000003px;" width="14" height="14" viewBox="0 0 24 24" fill="none" stroke="#fff" stroke-width="2.14" stroke-linecap="round" stroke-linejoin="round"><path d="M4 7h16"/><path d="M10 11v6"/><path d="M14 11v6"/><path d="M5 7l1 12a2 2 0 0 0 2 2h8a2 2 0 0 0 2 -2l1 -12"/><path d="M9 7v-3a1 1 0 0 1 1 -1h4a1 1 0 0 1 1 1v3"/></svg>
<div class="ln" style="top:540.4px"></div>
<div class="t" style="left:335.0px;top:568.0px;font-size:14px;font-weight:400;color:#3a4046;line-height:20px;letter-spacing:0.208px;">4</div>
<div class="t" style="left:515.5px;top:568.0px;font-size:14px;font-weight:400;color:#3a4046;line-height:20px;letter-spacing:0.484px;">Lawn Mower</div>
<div class="t" style="left:683.0px;top:568.0px;font-size:14px;font-weight:400;color:#3a4046;line-height:20px;letter-spacing:0.042px;">Day</div>
<div class="t" style="left:815.5px;top:568.0px;font-size:14px;font-weight:400;color:#3a4046;line-height:20px;letter-spacing:0.218px;">100</div>
<div class="t" style="left:945.0px;top:568.0px;font-size:14px;font-weight:400;color:#3a4046;line-height:20px;letter-spacing:0.216px;">66</div>
<div class="t" style="left:1159.5px;top:568.0px;font-size:14px;font-weight:400;color:#3a4046;line-height:20px;letter-spacing:0.184px;">$800.0</div>
<div class="t" style="left:1342.0px;top:568.0px;font-size:14px;font-weight:400;color:#3a4046;line-height:20px;letter-spacing:0.184px;">$800.0</div>
<div class="t" style="left:1555.5px;top:568.0px;font-size:14px;font-weight:400;color:#3a4046;line-height:20px;letter-spacing:0.392px;">Gardening</div>
<div class="im" style="top:553px"></div>
<svg class="i" style="left:432.9px;top:568.1px" width="14" height="15.4" viewBox="0 0 14 15.4"><rect x="1.6" y="1.6" width="10.8" height="12.2" rx="2" stroke="#7b84e8" stroke-width="1.7" fill="#e9f1fe"/><path d="M3.4 11.6V9.8L5 8.2L6.4 9.6L8.6 5.4L10.7 10V11.600z" fill="#7b84e8"/><rect x="3.6" y="4.2" width="1.3" height="1.900" rx=".4" fill="#7b84e8"/></svg>
<div class="b" style="left:433px;top:587.0px;width:14px;height:1px;background:#ccd3ef"></div>
<div class="ab" style="left:1719.2px;width:33.2px;top:562.95px;background:#ffa233"></div>
<svg class="i" style="left:1727.75px;top:570.8002px;" width="15.5" height="15.5" viewBox="0 0 24 24" fill="none" stroke="#fff" stroke-width="1.94" stroke-linecap="round" stroke-linejoin="round"><circle cx="12" cy="12" r="2"/><path d="M21 12c-2.4 4 -5.4 6 -9 6c-3.6 0 -6.6 -2 -9 -6c2.4 -4 5.4 -6 9 -6c3.6 0 6.6 2 9 6"/></svg>
<div class="ab" style="left:1760.2px;width:32px;top:562.95px;background:#0cc4d4"></div>
<svg class="i" style="left:1769.0500000000002px;top:571.2002px;" width="14.7" height="14.7" viewBox="0 0 24 24" fill="none" stroke="#fff" stroke-width="2.04" stroke-linecap="round" stroke-linejoin="round"><path d="M4 20h4l10.5 -10.5a2.828 2.828 0 1 0 -4 -4l-10.5 10.5v4"/><path d="M13.5 6.5l4 4"/></svg>
<div class="ab" style="left:1801px;width:32px;top:562.95px;background:#ff3a6e"></div>
<svg class="i" style="left:1810.2px;top:571.5502px;" width="14" height="14" viewBox="0 0 24 24" fill="none" stroke="#fff" stroke-width="2.14" stroke-linecap="round" stroke-linejoin="round"><path d="M4 7h16"/><path d="M10 11v6"/><path d="M14 11v6"/><path d="M5 7l1 12a2 2 0 0 0 2 2h8a2 2 0 0 0 2 -2l1 -12"/><path d="M9 7v-3a1 1 0 0 1 1 -1h4a1 1 0 0 1 1 1v3"/></svg>
<div class="ln" style="top:614.4px"></div>
<div class="t" style="left:335.0px;top:643.0px;font-size:14px;font-weight:400;color:#3a4046;line-height:20px;letter-spacing:0.208px;">5</div>
<div class="t" style="left:515.5px;top:643.0px;font-size:14px;font-weight:400;color:#3a4046;line-height:20px;letter-spacing:0.223px;">Pressure Washer</div>
<div class="t" style="left:683.0px;top:643.0px;font-size:14px;font-weight:400;color:#3a4046;line-height:20px;letter-spacing:0.042px;">Day</div>
<div class="t" style="left:815.5px;top:643.0px;font-size:14px;font-weight:400;color:#3a4046;line-height:20px;letter-spacing:0.218px;">100</div>
<div class="t" style="left:945.0px;top:643.0px;font-size:14px;font-weight:400;color:#3a4046;line-height:20px;letter-spacing:0.216px;">68</div>
<div class="t" style="left:1159.5px;top:643.0px;font-size:14px;font-weight:400;color:#3a4046;line-height:20px;letter-spacing:0.184px;">$600.0</div>
<div class="t" style="left:1342.0px;top:643.0px;font-size:14px;font-weight:400;color:#3a4046;line-height:20px;letter-spacing:0.184px;">$600.0</div>
<div class="t" style="left:1555.5px;top:643.0px;font-size:14px;font-weight:400;color:#3a4046;line-height:20px;letter-spacing:0.164px;">Cleaning</div>
<div class="im" style="top:627px"></div>
<svg class="i" style="left:432.9px;top:642.1px" width="14" height="15.4" viewBox="0 0 14 15.4"><rect x="1.6" y="1.6" width="10.8" height="12.2" rx="2" stroke="#7b84e8" stroke-width="1.7" fill="#e9f1fe"/><path d="M3.4 11.6V9.8L5 8.2L6.4 9.6L8.6 5.4L10.7 10V11.600z" fill="#7b84e8"/><rect x="3.6" y="4.2" width="1.3" height="1.900" rx=".4" fill="#7b84e8"/></svg>
<div class="b" style="left:433px;top:661.0px;width:14px;height:1px;background:#ccd3ef"></div>
<div class="ab" style="left:1719.2px;width:33.2px;top:637.28px;background:#ffa233"></div>
<svg class="i" style="left:1727.75px;top:645.1336px;" width="15.5" height="15.5" viewBox="0 0 24 24" fill="none" stroke="#fff" stroke-width="1.94" stroke-linecap="round" stroke-linejoin="round"><circle cx="12" cy="12" r="2"/><path d="M21 12c-2.4 4 -5.4 6 -9 6c-3.6 0 -6.6 -2 -9 -6c2.4 -4 5.4 -6 9 -6c3.6 0 6.6 2 9 6"/></svg>
<div class="ab" style="left:1760.2px;width:32px;top:637.28px;background:#0cc4d4"></div>
<svg class="i" style="left:1769.0500000000002px;top:645.5336px;" width="14.7" height="14.7" viewBox="0 0 24 24" fill="none" stroke="#fff" stroke-width="2.04" stroke-linecap="round" stroke-linejoin="round"><path d="M4 20h4l10.5 -10.5a2.828 2.828 0 1 0 -4 -4l-10.5 10.5v4"/><path d="M13.5 6.5l4 4"/></svg>
<div class="ab" style="left:1801px;width:32px;top:637.28px;background:#ff3a6e"></div>
<svg class="i" style="left:1810.2px;top:645.8836px;" width="14" height="14" viewBox="0 0 24 24" fill="none" stroke="#fff" stroke-width="2.14" stroke-linecap="round" stroke-linejoin="round"><path d="M4 7h16"/><path d="M10 11v6"/><path d="M14 11v6"/><path d="M5 7l1 12a2 2 0 0 0 2 2h8a2 2 0 0 0 2 -2l1 -12"/><path d="M9 7v-3a1 1 0 0 1 1 -1h4a1 1 0 0 1 1 1v3"/></svg>
<div class="ln" style="top:689.4px"></div>
<div class="t" style="left:335.0px;top:717.0px;font-size:14px;font-weight:400;color:#3a4046;line-height:20px;letter-spacing:0.208px;">6</div>
<div class="t" style="left:515.5px;top:717.0px;font-size:14px;font-weight:400;color:#3a4046;line-height:20px;letter-spacing:0.155px;">Sound System</div>
<div class="t" style="left:683.0px;top:717.0px;font-size:14px;font-weight:400;color:#3a4046;line-height:20px;letter-spacing:0.042px;">Day</div>
<div class="t" style="left:815.5px;top:717.0px;font-size:14px;font-weight:400;color:#3a4046;line-height:20px;letter-spacing:0.218px;">100</div>
<div class="t" style="left:945.0px;top:717.0px;font-size:14px;font-weight:400;color:#3a4046;line-height:20px;letter-spacing:0.216px;">72</div>
<div class="t" style="left:1159.5px;top:717.0px;font-size:14px;font-weight:400;color:#3a4046;line-height:20px;letter-spacing:0.098px;">$2,500.0</div>
<div class="t" style="left:1342.0px;top:717.0px;font-size:14px;font-weight:400;color:#3a4046;line-height:20px;letter-spacing:0.098px;">$2,500.0</div>
<div class="t" style="left:1555.5px;top:717.0px;font-size:14px;font-weight:400;color:#3a4046;line-height:20px;letter-spacing:0.396px;">Party Equipment</div>
<div class="im" style="top:702px"></div>
<svg class="i" style="left:432.9px;top:717.1px" width="14" height="15.4" viewBox="0 0 14 15.4"><rect x="1.6" y="1.6" width="10.8" height="12.2" rx="2" stroke="#7b84e8" stroke-width="1.7" fill="#e9f1fe"/><path d="M3.4 11.6V9.8L5 8.2L6.4 9.6L8.6 5.4L10.7 10V11.600z" fill="#7b84e8"/><rect x="3.6" y="4.2" width="1.3" height="1.900" rx=".4" fill="#7b84e8"/></svg>
<div class="b" style="left:433px;top:736.0px;width:14px;height:1px;background:#ccd3ef"></div>
<div class="ab" style="left:1719.2px;width:33.2px;top:711.62px;background:#ffa233"></div>
<svg class="i" style="left:1727.75px;top:719.467px;" width="15.5" height="15.5" viewBox="0 0 24 24" fill="none" stroke="#fff" stroke-width="1.94" stroke-linecap="round" stroke-linejoin="round"><circle cx="12" cy="12" r="2"/><path d="M21 12c-2.4 4 -5.4 6 -9 6c-3.6 0 -6.6 -2 -9 -6c2.4 -4 5.4 -6 9 -6c3.6 0 6.6 2 9 6"/></svg>
<div class="ab" style="left:1760.2px;width:32px;top:711.62px;background:#0cc4d4"></div>
<svg class="i" style="left:1769.0500000000002px;top:719.867px;" width="14.7" height="14.7" viewBox="0 0 24 24" fill="none" stroke="#fff" stroke-width="2.04" stroke-linecap="round" stroke-linejoin="round"><path d="M4 20h4l10.5 -10.5a2.828 2.828 0 1 0 -4 -4l-10.5 10.5v4"/><path d="M13.5 6.5l4 4"/></svg>
<div class="ab" style="left:1801px;width:32px;top:711.62px;background:#ff3a6e"></div>
<svg class="i" style="left:1810.2px;top:720.217px;" width="14" height="14" viewBox="0 0 24 24" fill="none" stroke="#fff" stroke-width="2.14" stroke-linecap="round" stroke-linejoin="round"><path d="M4 7h16"/><path d="M10 11v6"/><path d="M14 11v6"/><path d="M5 7l1 12a2 2 0 0 0 2 2h8a2 2 0 0 0 2 -2l1 -12"/><path d="M9 7v-3a1 1 0 0 1 1 -1h4a1 1 0 0 1 1 1v3"/></svg>
<div class="ln" style="top:763.4px"></div>
<div class="t" style="left:335.0px;top:792.0px;font-size:14px;font-weight:400;color:#3a4046;line-height:20px;letter-spacing:0.208px;">7</div>
<div class="t" style="left:515.5px;top:792.0px;font-size:14px;font-weight:400;color:#3a4046;line-height:20px;letter-spacing:0.295px;">Lighting Kit</div>
<div class="t" style="left:683.0px;top:792.0px;font-size:14px;font-weight:400;color:#3a4046;line-height:20px;letter-spacing:0.042px;">Day</div>
<div class="t" style="left:815.5px;top:792.0px;font-size:14px;font-weight:400;color:#3a4046;line-height:20px;letter-spacing:0.218px;">100</div>
<div class="t" style="left:945.0px;top:792.0px;font-size:14px;font-weight:400;color:#3a4046;line-height:20px;letter-spacing:0.216px;">70</div>
<div class="t" style="left:1159.5px;top:792.0px;font-size:14px;font-weight:400;color:#3a4046;line-height:20px;letter-spacing:0.098px;">$1,200.0</div>
<div class="t" style="left:1342.0px;top:792.0px;font-size:14px;font-weight:400;color:#3a4046;line-height:20px;letter-spacing:0.098px;">$1,200.0</div>
<div class="t" style="left:1555.5px;top:792.0px;font-size:14px;font-weight:400;color:#3a4046;line-height:20px;letter-spacing:0.396px;">Party Equipment</div>
<div class="im" style="top:776px"></div>
<svg class="i" style="left:432.9px;top:791.1px" width="14" height="15.4" viewBox="0 0 14 15.4"><rect x="1.6" y="1.6" width="10.8" height="12.2" rx="2" stroke="#7b84e8" stroke-width="1.7" fill="#e9f1fe"/><path d="M3.4 11.6V9.8L5 8.2L6.4 9.6L8.6 5.4L10.7 10V11.600z" fill="#7b84e8"/><rect x="3.6" y="4.2" width="1.3" height="1.900" rx=".4" fill="#7b84e8"/></svg>
<div class="b" style="left:433px;top:810.0px;width:14px;height:1px;background:#ccd3ef"></div>
<div class="ab" style="left:1719.2px;width:33.2px;top:785.95px;background:#ffa233"></div>
<svg class="i" style="left:1727.75px;top:793.8004px;" width="15.5" height="15.5" viewBox="0 0 24 24" fill="none" stroke="#fff" stroke-width="1.94" stroke-linecap="round" stroke-linejoin="round"><circle cx="12" cy="12" r="2"/><path d="M21 12c-2.4 4 -5.4 6 -9 6c-3.6 0 -6.6 -2 -9 -6c2.4 -4 5.4 -6 9 -6c3.6 0 6.6 2 9 6"/></svg>
<div class="ab" style="left:1760.2px;width:32px;top:785.95px;background:#0cc4d4"></div>
<svg class="i" style="left:1769.0500000000002px;top:794.2004px;" width="14.7" height="14.7" viewBox="0 0 24 24" fill="none" stroke="#fff" stroke-width="2.04" stroke-linecap="round" stroke-linejoin="round"><path d="M4 20h4l10.5 -10.5a2.828 2.828 0 1 0 -4 -4l-10.5 10.5v4"/><path d="M13.5 6.5l4 4"/></svg>
<div class="ab" style="left:1801px;width:32px;top:785.95px;background:#ff3a6e"></div>
<svg class="i" style="left:1810.2px;top:794.5504px;" width="14" height="14" viewBox="0 0 24 24" fill="none" stroke="#fff" stroke-width="2.14" stroke-linecap="round" stroke-linejoin="round"><path d="M4 7h16"/><path d="M10 11v6"/><path d="M14 11v6"/><path d="M5 7l1 12a2 2 0 0 0 2 2h8a2 2 0 0 0 2 -2l1 -12"/><path d="M9 7v-3a1 1 0 0 1 1 -1h4a1 1 0 0 1 1 1v3"/></svg>
<div class="ln" style="top:837.4px"></div>
<div class="t" style="left:335.0px;top:866.0px;font-size:14px;font-weight:400;color:#3a4046;line-height:20px;letter-spacing:0.208px;">8</div>
<div class="t" style="left:515.5px;top:866.0px;font-size:14px;font-weight:400;color:#3a4046;line-height:20px;letter-spacing:-0.030px;">Electric Saw</div>
<div class="t" style="left:683.0px;top:866.0px;font-size:14px;font-weight:400;color:#3a4046;line-height:20px;letter-spacing:0.042px;">Day</div>
<div class="t" style="left:815.5px;top:866.0px;font-size:14px;font-weight:400;color:#3a4046;line-height:20px;letter-spacing:0.218px;">100</div>
<div class="t" style="left:945.0px;top:866.0px;font-size:14px;font-weight:400;color:#3a4046;line-height:20px;letter-spacing:0.216px;">71</div>
<div class="t" style="left:1159.5px;top:866.0px;font-size:14px;font-weight:400;color:#3a4046;line-height:20px;letter-spacing:0.184px;">$300.0</div>
<div class="t" style="left:1342.0px;top:866.0px;font-size:14px;font-weight:400;color:#3a4046;line-height:20px;letter-spacing:0.184px;">$300.0</div>
<div class="t" style="left:1555.5px;top:866.0px;font-size:14px;font-weight:400;color:#3a4046;line-height:20px;letter-spacing:0.138px;">Electrical</div>
<div class="im" style="top:850px"></div>
<svg class="i" style="left:432.9px;top:865.1px" width="14" height="15.4" viewBox="0 0 14 15.4"><rect x="1.6" y="1.6" width="10.8" height="12.2" rx="2" stroke="#7b84e8" stroke-width="1.7" fill="#e9f1fe"/><path d="M3.4 11.6V9.8L5 8.2L6.4 9.6L8.6 5.4L10.7 10V11.600z" fill="#7b84e8"/><rect x="3.6" y="4.2" width="1.3" height="1.900" rx=".4" fill="#7b84e8"/></svg>
<div class="b" style="left:433px;top:884.0px;width:14px;height:1px;background:#ccd3ef"></div>
<div class="ab" style="left:1719.2px;width:33.2px;top:860.28px;background:#ffa233"></div>
<svg class="i" style="left:1727.75px;top:868.1338px;" width="15.5" height="15.5" viewBox="0 0 24 24" fill="none" stroke="#fff" stroke-width="1.94" stroke-linecap="round" stroke-linejoin="round"><circle cx="12" cy="12" r="2"/><path d="M21 12c-2.4 4 -5.4 6 -9 6c-3.6 0 -6.6 -2 -9 -6c2.4 -4 5.4 -6 9 -6c3.6 0 6.6 2 9 6"/></svg>
<div class="ab" style="left:1760.2px;width:32px;top:860.28px;background:#0cc4d4"></div>
<svg class="i" style="left:1769.0500000000002px;top:868.5337999999999px;" width="14.7" height="14.7" viewBox="0 0 24 24" fill="none" stroke="#fff" stroke-width="2.04" stroke-linecap="round" stroke-linejoin="round"><path d="M4 20h4l10.5 -10.5a2.828 2.828 0 1 0 -4 -4l-10.5 10.5v4"/><path d="M13.5 6.5l4 4"/></svg>
<div class="ab" style="left:1801px;width:32px;top:860.28px;background:#ff3a6e"></div>
<svg class="i" style="left:1810.2px;top:868.8838px;" width="14" height="14" viewBox="0 0 24 24" fill="none" stroke="#fff" stroke-width="2.14" stroke-linecap="round" stroke-linejoin="round"><path d="M4 7h16"/><path d="M10 11v6"/><path d="M14 11v6"/><path d="M5 7l1 12a2 2 0 0 0 2 2h8a2 2 0 0 0 2 -2l1 -12"/><path d="M9 7v-3a1 1 0 0 1 1 -1h4a1 1 0 0 1 1 1v3"/></svg>
<div class="ln" style="top:912.4px"></div>
<div class="t" style="left:335.0px;top:940.0px;font-size:14px;font-weight:400;color:#3a4046;line-height:20px;letter-spacing:0.208px;">9</div>
<div class="t" style="left:515.5px;top:940.0px;font-size:14px;font-weight:400;color:#3a4046;line-height:20px;letter-spacing:0.506px;">Hedge Trimmer</div>
<div class="t" style="left:683.0px;top:940.0px;font-size:14px;font-weight:400;color:#3a4046;line-height:20px;letter-spacing:0.042px;">Day</div>
<div class="t" style="left:815.5px;top:940.0px;font-size:14px;font-weight:400;color:#3a4046;line-height:20px;letter-spacing:0.218px;">100</div>
<div class="t" style="left:945.0px;top:940.0px;font-size:14px;font-weight:400;color:#3a4046;line-height:20px;letter-spacing:0.216px;">65</div>
<div class="t" style="left:1159.5px;top:940.0px;font-size:14px;font-weight:400;color:#3a4046;line-height:20px;letter-spacing:0.184px;">$400.0</div>
<div class="t" style="left:1342.0px;top:940.0px;font-size:14px;font-weight:400;color:#3a4046;line-height:20px;letter-spacing:0.184px;">$400.0</div>
<div class="t" style="left:1555.5px;top:940.0px;font-size:14px;font-weight:400;color:#3a4046;line-height:20px;letter-spacing:0.392px;">Gardening</div>
<div class="im" style="top:925px"></div>
<svg class="i" style="left:432.9px;top:940.1px" width="14" height="15.4" viewBox="0 0 14 15.4"><rect x="1.6" y="1.6" width="10.8" height="12.2" rx="2" stroke="#7b84e8" stroke-width="1.7" fill="#e9f1fe"/><path d="M3.4 11.6V9.8L5 8.2L6.4 9.6L8.6 5.4L10.7 10V11.600z" fill="#7b84e8"/><rect x="3.6" y="4.2" width="1.3" height="1.900" rx=".4" fill="#7b84e8"/></svg>
<div class="b" style="left:433px;top:959.0px;width:14px;height:1px;background:#ccd3ef"></div>
<div class="ab" style="left:1719.2px;width:33.2px;top:934.62px;background:#ffa233"></div>
<svg class="i" style="left:1727.75px;top:942.4671999999999px;" width="15.5" height="15.5" viewBox="0 0 24 24" fill="none" stroke="#fff" stroke-width="1.94" stroke-linecap="round" stroke-linejoin="round"><circle cx="12" cy="12" r="2"/><path d="M21 12c-2.4 4 -5.4 6 -9 6c-3.6 0 -6.6 -2 -9 -6c2.4 -4 5.4 -6 9 -6c3.6 0 6.6 2 9 6"/></svg>
<div class="ab" style="left:1760.2px;width:32px;top:934.62px;background:#0cc4d4"></div>
<svg class="i" style="left:1769.0500000000002px;top:942.8671999999999px;" width="14.7" height="14.7" viewBox="0 0 24 24" fill="none" stroke="#fff" stroke-width="2.04" stroke-linecap="round" stroke-linejoin="round"><path d="M4 20h4l10.5 -10.5a2.828 2.828 0 1 0 -4 -4l-10.5 10.5v4"/><path d="M13.5 6.5l4 4"/></svg>
<div class="ab" style="left:1801px;width:32px;top:934.62px;background:#ff3a6e"></div>
<svg class="i" style="left:1810.2px;top:943.2171999999999px;" width="14" height="14" viewBox="0 0 24 24" fill="none" stroke="#fff" stroke-width="2.14" stroke-linecap="round" stroke-linejoin="round"><path d="M4 7h16"/><path d="M10 11v6"/><path d="M14 11v6"/><path d="M5 7l1 12a2 2 0 0 0 2 2h8a2 2 0 0 0 2 -2l1 -12"/><path d="M9 7v-3a1 1 0 0 1 1 -1h4a1 1 0 0 1 1 1v3"/></svg>
<div class="ln" style="top:986.4px"></div>
<div class="t" style="left:335.0px;top:1015.0px;font-size:14px;font-weight:400;color:#3a4046;line-height:20px;letter-spacing:0.216px;">10</div>
<div class="t" style="left:515.5px;top:1015.0px;font-size:14px;font-weight:400;color:#3a4046;line-height:20px;letter-spacing:0.199px;">Carpet Cleaner</div>
<div class="t" style="left:683.0px;top:1015.0px;font-size:14px;font-weight:400;color:#3a4046;line-height:20px;letter-spacing:0.042px;">Day</div>
<div class="t" style="left:815.5px;top:1015.0px;font-size:14px;font-weight:400;color:#3a4046;line-height:20px;letter-spacing:0.218px;">100</div>
<div class="t" style="left:945.0px;top:1015.0px;font-size:14px;font-weight:400;color:#3a4046;line-height:20px;letter-spacing:0.216px;">65</div>
<div class="t" style="left:1159.5px;top:1015.0px;font-size:14px;font-weight:400;color:#3a4046;line-height:20px;letter-spacing:0.184px;">$700.0</div>
<div class="t" style="left:1342.0px;top:1015.0px;font-size:14px;font-weight:400;color:#3a4046;line-height:20px;letter-spacing:0.184px;">$700.0</div>
<div class="t" style="left:1555.5px;top:1015.0px;font-size:14px;font-weight:400;color:#3a4046;line-height:20px;letter-spacing:0.164px;">Cleaning</div>
<div class="im" style="top:999px"></div>
<svg class="i" style="left:432.9px;top:1014.1px" width="14" height="15.4" viewBox="0 0 14 15.4"><rect x="1.6" y="1.6" width="10.8" height="12.2" rx="2" stroke="#7b84e8" stroke-width="1.7" fill="#e9f1fe"/><path d="M3.4 11.6V9.8L5 8.2L6.4 9.6L8.6 5.4L10.7 10V11.600z" fill="#7b84e8"/><rect x="3.6" y="4.2" width="1.3" height="1.900" rx=".4" fill="#7b84e8"/></svg>
<div class="b" style="left:433px;top:1033.0px;width:14px;height:1px;background:#ccd3ef"></div>
<div class="ab" style="left:1719.2px;width:33.2px;top:1008.95px;background:#ffa233"></div>
<svg class="i" style="left:1727.75px;top:1016.8005999999998px;" width="15.5" height="15.5" viewBox="0 0 24 24" fill="none" stroke="#fff" stroke-width="1.94" stroke-linecap="round" stroke-linejoin="round"><circle cx="12" cy="12" r="2"/><path d="M21 12c-2.4 4 -5.4 6 -9 6c-3.6 0 -6.6 -2 -9 -6c2.4 -4 5.4 -6 9 -6c3.6 0 6.6 2 9 6"/></svg>
<div class="ab" style="left:1760.2px;width:32px;top:1008.95px;background:#0cc4d4"></div>
<svg class="i" style="left:1769.0500000000002px;top:1017.2005999999998px;" width="14.7" height="14.7" viewBox="0 0 24 24" fill="none" stroke="#fff" stroke-width="2.04" stroke-linecap="round" stroke-linejoin="round"><path d="M4 20h4l10.5 -10.5a2.828 2.828 0 1 0 -4 -4l-10.5 10.5v4"/><path d="M13.5 6.5l4 4"/></svg>
<div class="ab" style="left:1801px;width:32px;top:1008.95px;background:#ff3a6e"></div>
<svg class="i" style="left:1810.2px;top:1017.5505999999998px;" width="14" height="14" viewBox="0 0 24 24" fill="none" stroke="#fff" stroke-width="2.14" stroke-linecap="round" stroke-linejoin="round"><path d="M4 7h16"/><path d="M10 11v6"/><path d="M14 11v6"/><path d="M5 7l1 12a2 2 0 0 0 2 2h8a2 2 0 0 0 2 -2l1 -12"/><path d="M9 7v-3a1 1 0 0 1 1 -1h4a1 1 0 0 1 1 1v3"/></svg>
<div class="ln" style="top:1060.4px"></div>
</body></html>
